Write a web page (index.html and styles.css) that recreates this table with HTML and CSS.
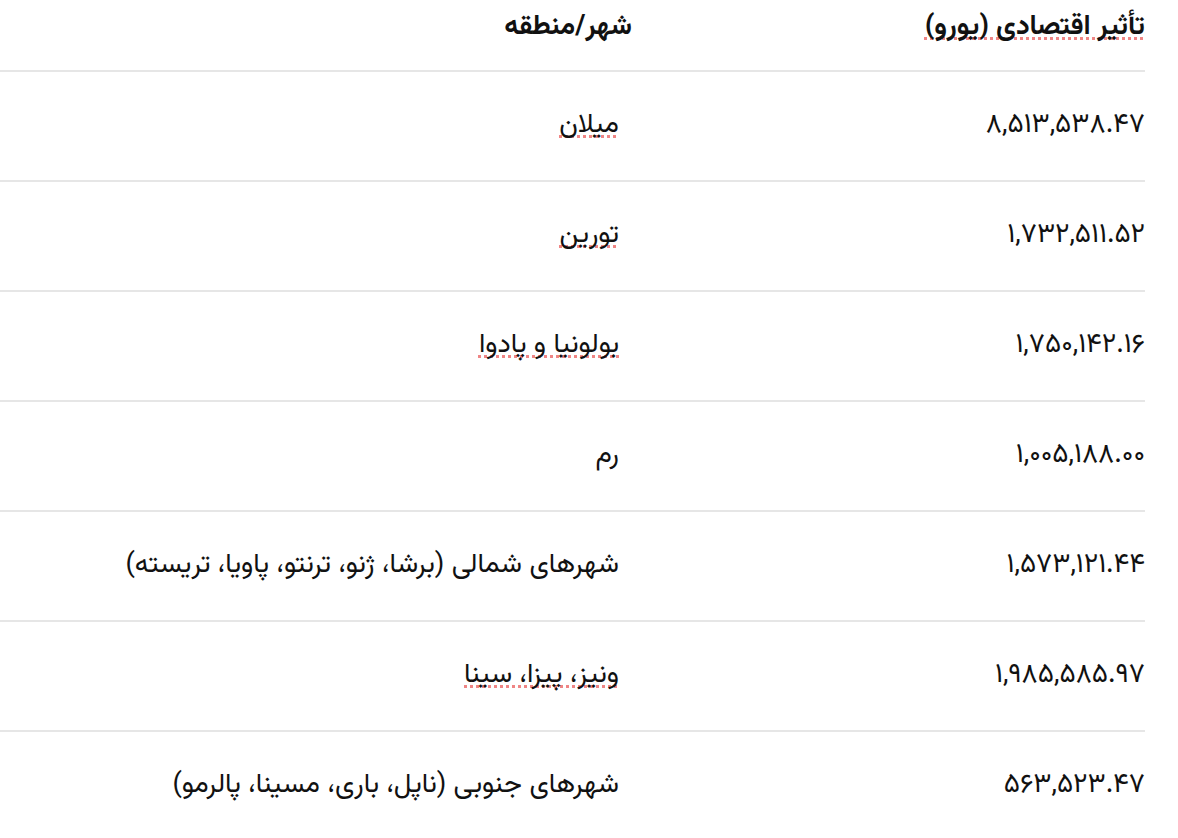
FILE: index.html
```html
<!DOCTYPE html>
<html lang="fa" dir="rtl">
<head>
<meta charset="utf-8">
<link rel="stylesheet" href="styles.css">
</head>
<body>
<div class="table">
  <div class="row head">
    <div class="cell num"><span class="spell">تأثیر اقتصادی (یورو)</span></div>
    <div class="cell city">شهر/منطقه</div>
  </div>
  <div class="row">
    <div class="cell num">۸,۵۱۳,۵۳۸.۴۷</div>
    <div class="cell city"><span class="spell">میلان</span></div>
  </div>
  <div class="row">
    <div class="cell num">۱,۷۳۲,۵۱۱.۵۲</div>
    <div class="cell city"><span class="spell">تورین</span></div>
  </div>
  <div class="row">
    <div class="cell num">۱,۷۵۰,۱۴۲.۱۶</div>
    <div class="cell city"><span class="spell">بولونیا و پادوا</span></div>
  </div>
  <div class="row">
    <div class="cell num">۱,۰۰۵,۱۸۸.۰۰</div>
    <div class="cell city">رم</div>
  </div>
  <div class="row">
    <div class="cell num">۱,۵۷۳,۱۲۱.۴۴</div>
    <div class="cell city">شهرهای شمالی (برشا، ژنو، ترنتو، پاویا، تریسته)</div>
  </div>
  <div class="row">
    <div class="cell num">۱,۹۸۵,۵۸۵.۹۷</div>
    <div class="cell city"><span class="spell">ونیز، پیزا، سینا</span></div>
  </div>
  <div class="row">
    <div class="cell num">۵۶۳,۵۲۳.۴۷</div>
    <div class="cell city">شهرهای جنوبی (ناپل، باری، مسینا، پالرمو)</div>
  </div>
</div>
</body>
</html>
```
FILE: styles.css
```css
html, body {
  margin: 0;
  padding: 0;
  background: #ffffff;
}
body {
  font-family: "Vazirmatn", "Vazir", "Noto Sans Arabic UI", "Noto Sans Arabic", "Noto Naskh Arabic", sans-serif;
  color: #111111;
  overflow: hidden;
}
.table {
  width: 1145px;
  margin-right: 33px;
  margin-left: 0;
}
.row {
  display: grid;
  grid-template-columns: 513px 632px;
  height: 108px;
  align-items: center;
  border-bottom: 2px solid #e6e6e6;
}
.row.head {
  height: 70px;
  align-items: start;
}
.cell {
  font-size: 27.5px;
  line-height: 36px;
  white-space: nowrap;
}
.head .cell {
  font-weight: bold;
  padding-top: 10px;
}
.row:not(.head) .city {
  padding-right: 13px;
}
.spell {
  text-decoration-line: underline;
  text-decoration-style: dotted;
  text-decoration-color: #ef8585;
  text-decoration-thickness: 3px;
  text-underline-offset: 3px;
  text-decoration-skip-ink: none;
}
```
